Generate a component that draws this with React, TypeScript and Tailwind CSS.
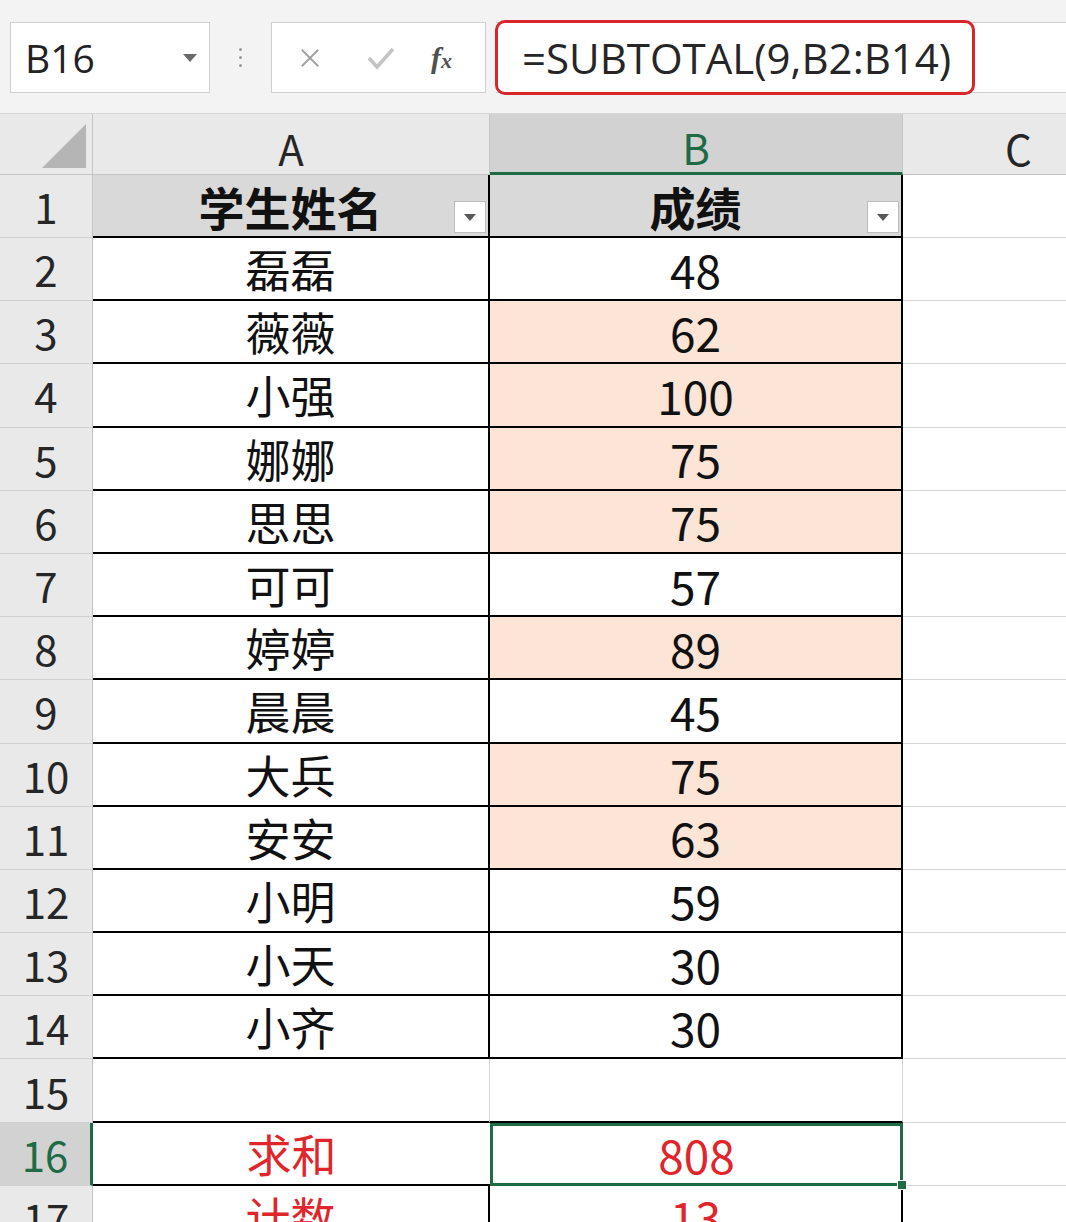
const ROWS: { n: number; name: string; score: string; hl?: boolean }[] = [
  { n: 2, name: "磊磊", score: "48" },
  { n: 3, name: "薇薇", score: "62", hl: true },
  { n: 4, name: "小强", score: "100", hl: true },
  { n: 5, name: "娜娜", score: "75", hl: true },
  { n: 6, name: "思思", score: "75", hl: true },
  { n: 7, name: "可可", score: "57" },
  { n: 8, name: "婷婷", score: "89", hl: true },
  { n: 9, name: "晨晨", score: "45" },
  { n: 10, name: "大兵", score: "75", hl: true },
  { n: 11, name: "安安", score: "63", hl: true },
  { n: 12, name: "小明", score: "59" },
  { n: 13, name: "小天", score: "30" },
  { n: 14, name: "小齐", score: "30" },
];

const font = "font-['Noto_Sans_CJK_SC','Noto_Sans',sans-serif]";

function FilterButton() {
  return (
    <span className="absolute bottom-[3px] right-[2px] grid h-[32px] w-[32px] place-items-center border border-[#bdbdbd] bg-white">
      <svg width="12" height="7" viewBox="0 0 12 7">
        <path d="M0 0h12L6 7z" fill="#595959" />
      </svg>
    </span>
  );
}

function RowHeader({ n, active }: { n: number; active?: boolean }) {
  return (
    <div
      className={`flex w-[93px] shrink-0 items-center justify-center border-b border-[#d0d0d0] text-[42px] leading-none ${
        active
          ? "border-r-[3px] border-r-[#1e6b45] bg-[#d2d2d2] text-[#1e6b45]"
          : "border-r border-r-[#c4c4c4] bg-[#e9e9e9] text-[#262626]"
      }`}
    >
      {n}
    </div>
  );
}

export default function App() {
  return (
    <div className={`h-[1222px] w-[1066px] overflow-hidden bg-white ${font}`}>
      {/* Formula bar */}
      <div className="flex h-[113px] items-start bg-[#f3f3f3] pt-[22px]">
        <div className="ml-[10px] flex h-[71px] w-[200px] items-center justify-between border border-[#cfcfcf] bg-white pl-[14px] pr-[12px]">
          <span className="font-['Open_Sans',sans-serif] text-[39px] leading-none text-[#222]">B16</span>
          <svg width="14" height="8" viewBox="0 0 14 8">
            <path d="M0 0h14L7 8z" fill="#6b6b6b" />
          </svg>
        </div>
        <div className="flex h-[71px] w-[61px] flex-col items-center justify-center gap-[5px]">
          <span className="h-[3px] w-[3px] rounded-full bg-[#9a9a9a]" />
          <span className="h-[3px] w-[3px] rounded-full bg-[#9a9a9a]" />
          <span className="h-[3px] w-[3px] rounded-full bg-[#9a9a9a]" />
        </div>
        <div className="flex h-[71px] w-[215px] items-center border border-[#cfcfcf] bg-white">
          <svg className="ml-[27px]" width="22" height="22" viewBox="0 0 24 24">
            <path d="M3 3l18 18M21 3L3 21" stroke="#a0a0a0" strokeWidth="2" fill="none" />
          </svg>
          <svg className="ml-[46px]" width="28" height="24" viewBox="0 0 28 24">
            <path d="M2 12l8 9L26 3" stroke="#c4c4c4" strokeWidth="3.5" fill="none" />
          </svg>
          <span className="ml-[36px] font-['Liberation_Serif',serif] text-[30px] font-bold italic leading-none text-[#505050]">
            f<span className="text-[22px]">x</span>
          </span>
        </div>
        <div className="ml-[10px] flex h-[71px] flex-1 items-center border-y border-[#cfcfcf] bg-white">
          <div className="-my-[2px] -ml-[1px] flex h-[75px] w-[480px] items-center rounded-[10px] border-[3px] border-[#d9262b] pl-[24px]">
            <span className="font-['Open_Sans',sans-serif] text-[42px] leading-none text-[#262626]">
              =SUBTOTAL(9,B2:B14)
            </span>
          </div>
        </div>
      </div>

      {/* Column headers */}
      <div className="flex h-[62px] border-t border-[#d6d6d6] bg-[#e9e9e9]">
        <div className="relative w-[93px] shrink-0 border-r border-b border-[#c4c4c4]">
          <svg className="absolute bottom-[6px] right-[6px]" width="44" height="44" viewBox="0 0 44 44">
            <path d="M44 0v44H0z" fill="#b5b5b5" />
          </svg>
        </div>
        <div className="flex w-[397px] shrink-0 items-center justify-center border-r border-b border-[#c4c4c4] pt-[6px] text-[42px] text-[#262626]">
          A
        </div>
        <div className="flex w-[413px] shrink-0 items-center justify-center border-r border-[#c4c4c4] border-b-[3px] border-b-[#1e6b45] bg-[#d2d2d2] pt-[6px] text-[42px] text-[#1e6b45]">
          B
        </div>
        <div className="flex flex-1 items-center border-b border-[#c4c4c4] pl-[102px] pt-[6px] text-[42px] text-[#262626]">
          C
        </div>
      </div>

      {/* Row 1 header */}
      <div className="flex h-[63px]">
        <RowHeader n={1} />
        <div className="relative flex w-[397px] shrink-0 items-center justify-center border-r-2 border-b-2 border-black bg-[#d9d9d9] text-[46px] font-bold leading-none text-[#111]">
          学生姓名
          <FilterButton />
        </div>
        <div className="relative flex w-[413px] shrink-0 items-center justify-center border-r-2 border-b-2 border-black bg-[#d9d9d9] text-[46px] font-bold leading-none text-[#111]">
          成绩
          <FilterButton />
        </div>
        <div className="flex-1 border-b border-[#d4d4d4]" />
      </div>

      {ROWS.map((r) => (
        <div key={r.n} className="flex h-[63.2px]">
          <RowHeader n={r.n} />
          <div className="flex w-[397px] shrink-0 items-center justify-center border-r-2 border-b-2 border-black text-[45px] leading-none text-[#111]">
            {r.name}
          </div>
          <div
            className={`flex w-[413px] shrink-0 items-center justify-center border-r-2 border-b-2 border-black text-[46px] leading-none text-[#111] ${
              r.hl ? "bg-[#fce4d6]" : "bg-white"
            }`}
          >
            {r.score}
          </div>
          <div className="flex-1 border-b border-[#d4d4d4]" />
        </div>
      ))}

      {/* Row 15 */}
      <div className="flex h-[63.2px]">
        <RowHeader n={15} />
        <div className="w-[397px] shrink-0 border-r border-b-2 border-r-[#d4d4d4] border-b-black" />
        <div className="w-[413px] shrink-0 border-r border-b-2 border-r-[#d4d4d4] border-b-black" />
        <div className="flex-1 border-b border-[#d4d4d4]" />
      </div>

      {/* Row 16 */}
      <div className="flex h-[63.2px]">
        <RowHeader n={16} active />
        <div className="flex w-[397px] shrink-0 items-center justify-center border-b-2 border-black text-[45px] leading-none text-[#e0262b]">
          求和
        </div>
        <div className="relative flex w-[413px] shrink-0 items-center justify-center border-[3px] border-[#1e6b45] text-[46px] leading-none text-[#e0262b]">
          808
          <span className="absolute -right-[7px] -bottom-[7px] h-[10px] w-[10px] border border-white bg-[#1e6b45]" />
        </div>
        <div className="flex-1 border-b border-[#d4d4d4]" />
      </div>

      {/* Row 17 */}
      <div className="flex h-[63.2px]">
        <RowHeader n={17} />
        <div className="flex w-[397px] shrink-0 items-center justify-center border-r-2 border-b-2 border-black text-[45px] leading-none text-[#e0262b]">
          计数
        </div>
        <div className="flex w-[413px] shrink-0 items-center justify-center border-r-2 border-b-2 border-black text-[46px] leading-none text-[#e0262b]">
          13
        </div>
        <div className="flex-1 border-b border-[#d4d4d4]" />
      </div>
    </div>
  );
}
